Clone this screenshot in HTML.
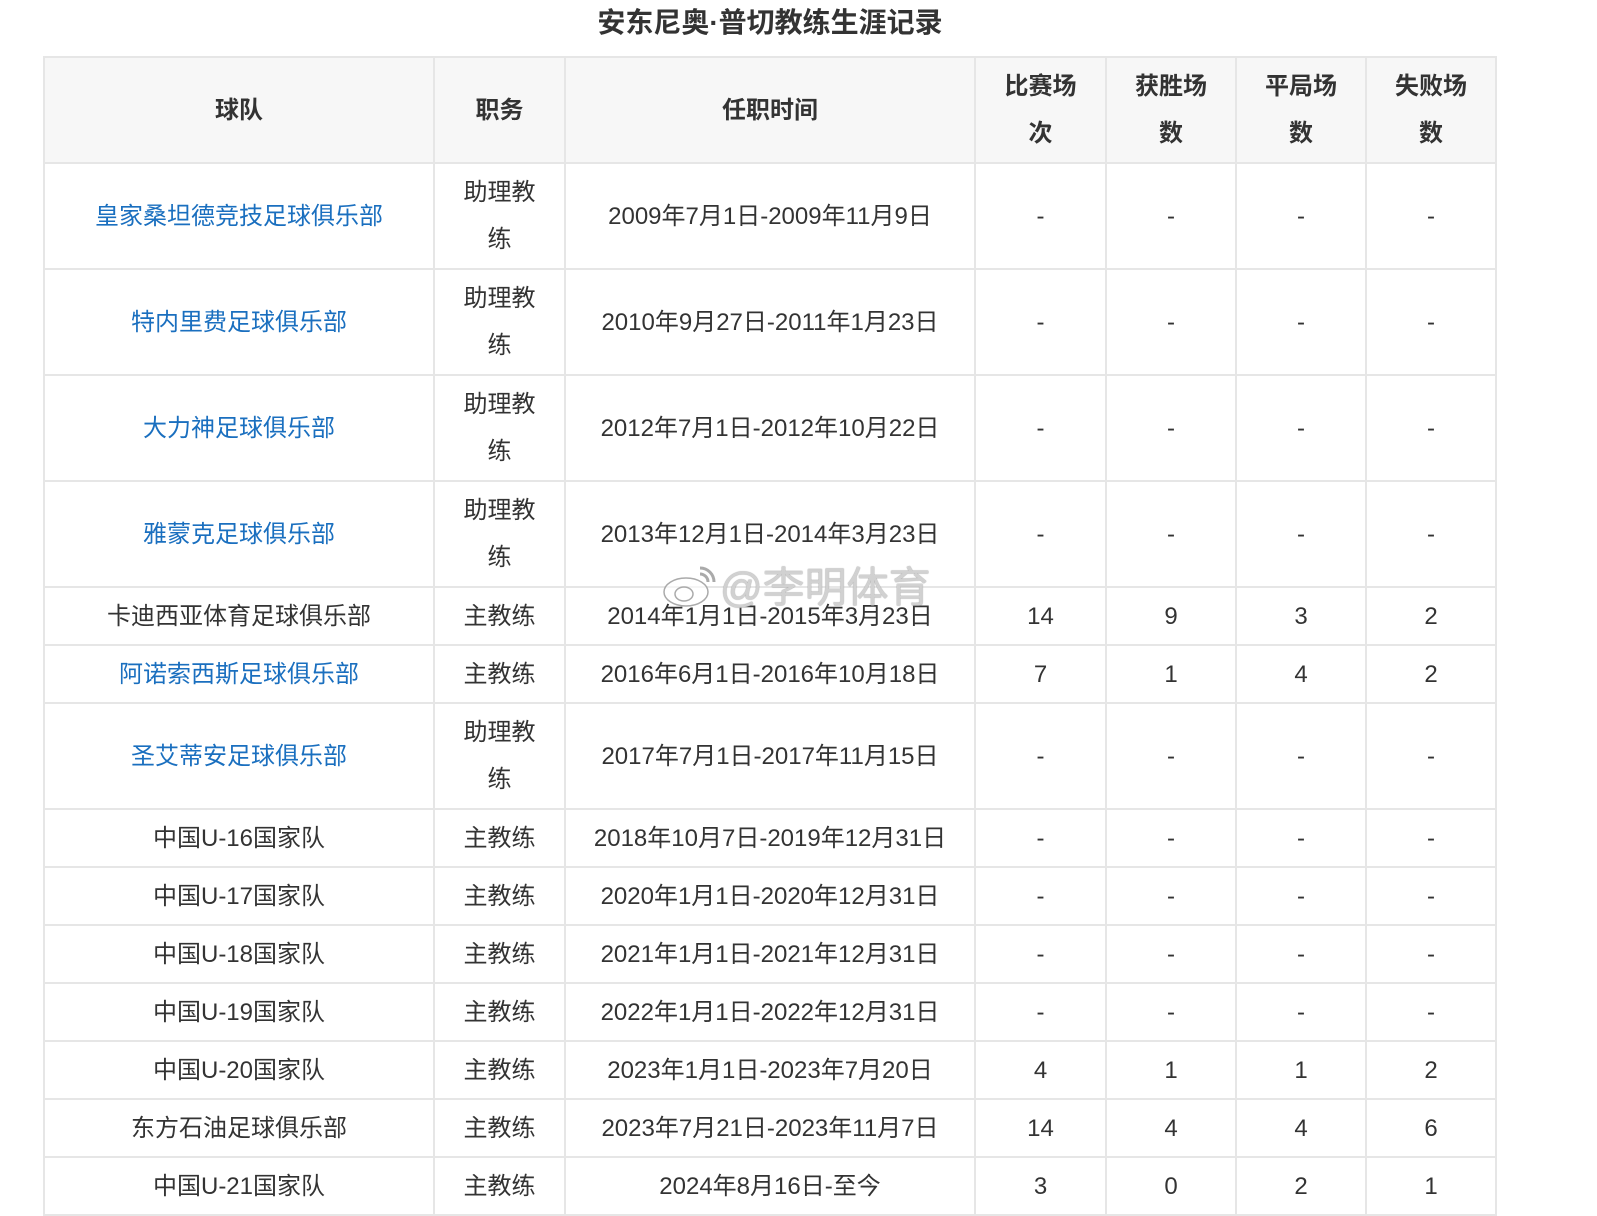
<!DOCTYPE html>
<html><head><meta charset="utf-8"><style>
html,body{margin:0;padding:0;background:#fff;width:1597px;height:1185px;overflow:hidden}
body{font-family:"Liberation Sans","Noto Sans CJK SC",sans-serif;color:#333}
h1{position:absolute;left:0;width:1540px;top:4px;margin:0;text-align:center;font-size:28px;font-weight:bold;line-height:38px;color:#333}
table{position:absolute;left:43px;top:56px;border-collapse:collapse;table-layout:fixed;width:1454px}
td,th{border:2px solid #e6e6e6;text-align:center;font-size:24px;line-height:47px;padding:4px 18px;vertical-align:middle}
th{background:#f7f7f7;font-weight:bold;height:96px}
tr.s td{height:48px}
tr.t td{height:96px}
a{color:#1a6fbf;text-decoration:none}
.wm{position:absolute;left:662px;top:562px;font-size:42px;color:rgba(255,255,255,.55);text-shadow:0 0 1px #999,0 0 1px #999;white-space:nowrap;line-height:50px}
</style></head><body>
<h1>安东尼奥·普切教练生涯记录</h1>
<table>
<colgroup><col style="width:390px"><col style="width:131px"><col style="width:410px"><col style="width:131px"><col style="width:130px"><col style="width:130px"><col style="width:130px"></colgroup>
<tr><th>球队</th><th>职务</th><th>任职时间</th><th>比赛场次</th><th>获胜场数</th><th>平局场数</th><th>失败场数</th></tr>
<tr class="t"><td><a>皇家桑坦德竞技足球俱乐部</a></td><td>助理教练</td><td>2009年7月1日-2009年11月9日</td><td>-</td><td>-</td><td>-</td><td>-</td></tr>
<tr class="t"><td><a>特内里费足球俱乐部</a></td><td>助理教练</td><td>2010年9月27日-2011年1月23日</td><td>-</td><td>-</td><td>-</td><td>-</td></tr>
<tr class="t"><td><a>大力神足球俱乐部</a></td><td>助理教练</td><td>2012年7月1日-2012年10月22日</td><td>-</td><td>-</td><td>-</td><td>-</td></tr>
<tr class="t"><td><a>雅蒙克足球俱乐部</a></td><td>助理教练</td><td>2013年12月1日-2014年3月23日</td><td>-</td><td>-</td><td>-</td><td>-</td></tr>
<tr class="s"><td>卡迪西亚体育足球俱乐部</td><td>主教练</td><td>2014年1月1日-2015年3月23日</td><td>14</td><td>9</td><td>3</td><td>2</td></tr>
<tr class="s"><td><a>阿诺索西斯足球俱乐部</a></td><td>主教练</td><td>2016年6月1日-2016年10月18日</td><td>7</td><td>1</td><td>4</td><td>2</td></tr>
<tr class="t"><td><a>圣艾蒂安足球俱乐部</a></td><td>助理教练</td><td>2017年7月1日-2017年11月15日</td><td>-</td><td>-</td><td>-</td><td>-</td></tr>
<tr class="s"><td>中国U-16国家队</td><td>主教练</td><td>2018年10月7日-2019年12月31日</td><td>-</td><td>-</td><td>-</td><td>-</td></tr>
<tr class="s"><td>中国U-17国家队</td><td>主教练</td><td>2020年1月1日-2020年12月31日</td><td>-</td><td>-</td><td>-</td><td>-</td></tr>
<tr class="s"><td>中国U-18国家队</td><td>主教练</td><td>2021年1月1日-2021年12月31日</td><td>-</td><td>-</td><td>-</td><td>-</td></tr>
<tr class="s"><td>中国U-19国家队</td><td>主教练</td><td>2022年1月1日-2022年12月31日</td><td>-</td><td>-</td><td>-</td><td>-</td></tr>
<tr class="s"><td>中国U-20国家队</td><td>主教练</td><td>2023年1月1日-2023年7月20日</td><td>4</td><td>1</td><td>1</td><td>2</td></tr>
<tr class="s"><td>东方石油足球俱乐部</td><td>主教练</td><td>2023年7月21日-2023年11月7日</td><td>14</td><td>4</td><td>4</td><td>6</td></tr>
<tr class="s"><td>中国U-21国家队</td><td>主教练</td><td>2024年8月16日-至今</td><td>3</td><td>0</td><td>2</td><td>1</td></tr>
</table>
<div class="wm"><svg width="58" height="46" viewBox="0 0 58 46" style="vertical-align:-6px"><ellipse cx="24" cy="30" rx="22" ry="14" fill="rgba(255,255,255,.6)" stroke="#aaa" stroke-width="1.5"/><ellipse cx="22" cy="32" rx="9" ry="7" fill="none" stroke="#aaa" stroke-width="1.5"/><path d="M38 6a14 14 0 0 1 14 14M38 12a8 8 0 0 1 8 8" fill="none" stroke="#aaa" stroke-width="3"/></svg>@李明体育</div>
</body></html>
